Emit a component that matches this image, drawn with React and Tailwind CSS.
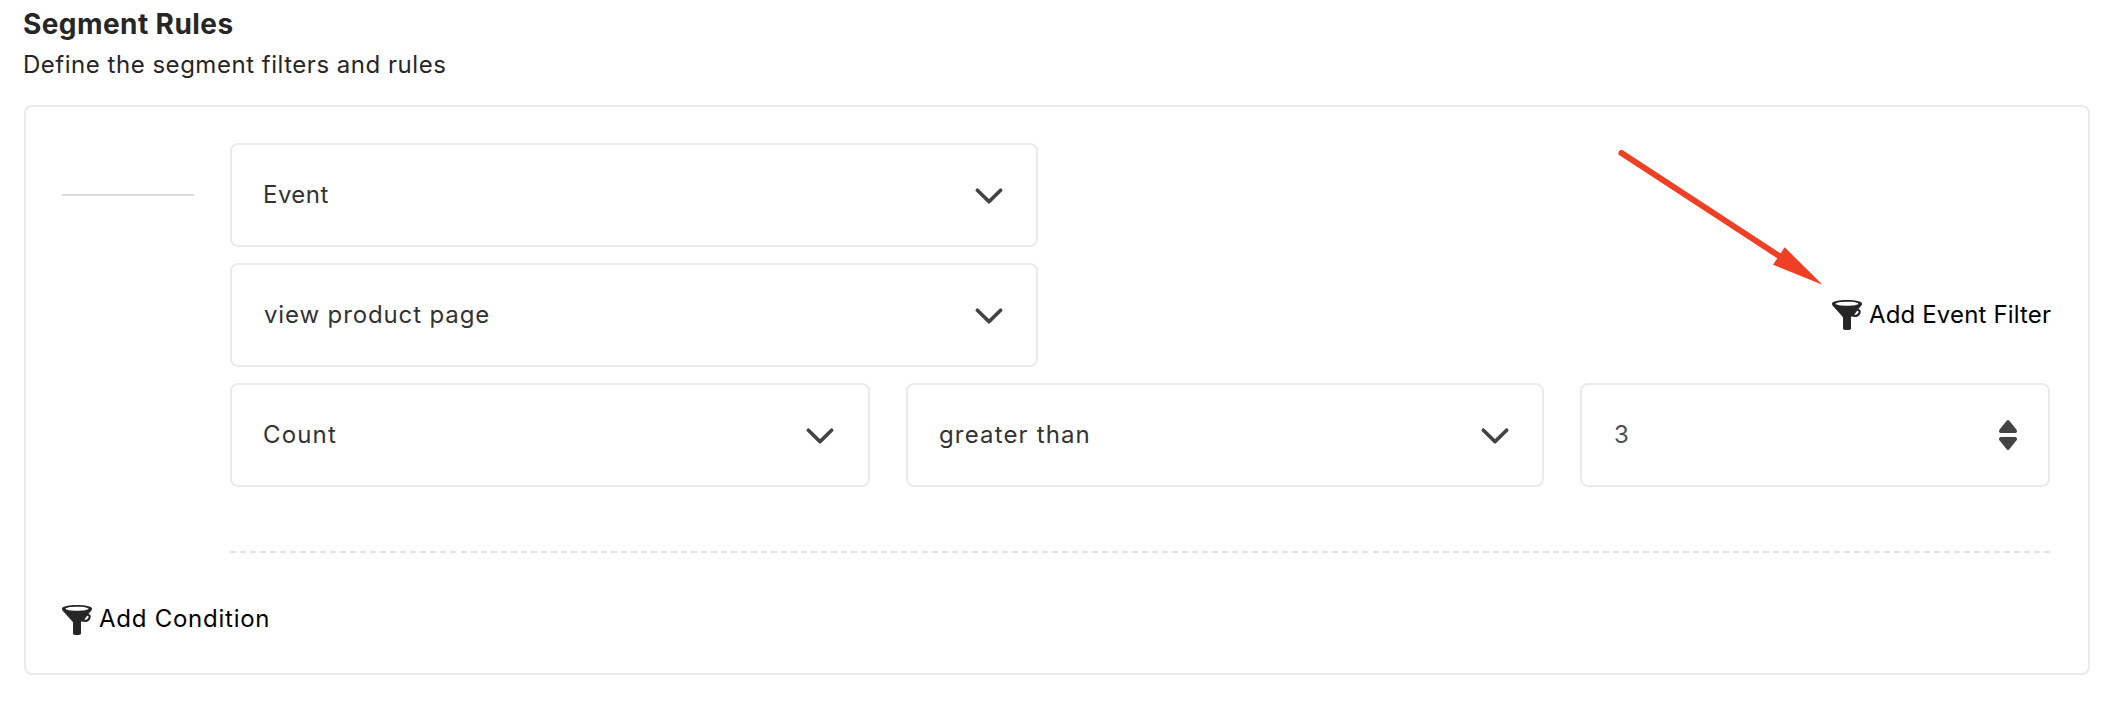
const Chevron = () => (
  <svg className="mt-0.5 h-4 w-7 shrink-0" viewBox="0 0 28 16" fill="none" stroke="#444" strokeWidth="3.6" strokeLinecap="round" strokeLinejoin="round">
    <path d="M2.4 2.2 14 13.6 25.6 2.2" />
  </svg>
);

const Funnel = () => (
  <svg className="size-[30px] shrink-0" viewBox="0 0 30 30">
    <path fill="#262626" fillRule="evenodd" d="M15 0C23 0 30 1.200 30 3.700c0 1.200-.8 2.200-1.700 3.100l-1.900 2.100c1.900.2 2.700 1.700 2.200 3.800-.6 2.600-2.500 4.200-5.100 4.200-1.400 0-2.900-.2-4.500-.5V28.500C19 29.500 17.300 30 15 30s-4-.5-4-1.500V17.200L1.700 6.800C.8 5.900 0 4.900 0 3.700 0 1.200 7 0 15 0ZM15 1.700C8.500 1.700 3.600 2.600 3.600 3.700S8.500 5.700 15 5.700s11.400-.9 11.400-2S21.500 1.700 15 1.700ZM25 10.900l-2.700 3.500c1.900.7 3.700-.2 4.200-1.800.3-1.100-.2-1.900-1.500-1.700Z" />
  </svg>
);

const Spinner = () => (
  <svg className="h-[30px] w-[18px] shrink-0" viewBox="0 0 18 30" fill="#444">
    <path d="M7.900.5Q9-.5 10.100.5L17.400 9.400Q18 10.300 18 11.300 18 13 16.300 13H1.700Q0 13 0 11.300 0 10.300.6 9.400ZM7.900 29.500Q9 30.500 10.100 29.500L17.400 20.600Q18 19.700 18 18.700 18 17 16.300 17H1.700Q0 17 0 18.700 0 19.700.6 20.600Z" />
  </svg>
);

function Field({ className, children }) {
  return (
    <div className={"flex h-[104px] items-center justify-between rounded-lg border-2 border-[#ebebeb] bg-white " + className}>
      {children}
    </div>
  );
}

export default function App() {
  return (
    <main className="relative h-[714px] w-[2112px] overflow-hidden bg-white pl-6 pt-1 font-['Inter',sans-serif] text-[24px] leading-9 text-[#333]">
      <h1 className="-ml-px h-[42px] text-[28px] font-bold leading-[41px] tracking-[0.42px] text-[#262626]">Segment Rules</h1>
      <p className="-ml-px h-[59px] leading-[38px] tracking-[0.52px] text-[#262626]">Define the segment filters and rules</p>

      <section className="h-[570px] w-[2066px] rounded-lg border-2 border-[#ebebeb] pl-9 pr-[38px] pt-9">
        <div className="flex gap-9">
          <div className="mt-[51px] h-0.5 w-[132px] bg-[#dcdcdc]" />
          <div className="flex w-[1820px] flex-col gap-4">
            <Field className="w-[808px] pl-[31px] pr-[33px]">
              <span className="tracking-[0.45px]">Event</span>
              <Chevron />
            </Field>
            <div className="flex items-center justify-between">
              <Field className="w-[808px] pl-8 pr-[33px]">
                <span className="tracking-[0.87px]">view product page</span>
                <Chevron />
              </Field>
              <button className="flex w-[218px] items-center gap-[7px] whitespace-nowrap text-black">
                <Funnel />
                <span className="tracking-[0.15px]">Add Event Filter</span>
              </button>
            </div>
            <div className="flex justify-between">
              <Field className="w-[640px] pl-[31px] pr-[34px]">
                <span className="tracking-[1.15px]">Count</span>
                <Chevron />
              </Field>
              <Field className="w-[638px] pl-[31px] pr-[33px]">
                <span className="tracking-[1.15px]">greater than</span>
                <Chevron />
              </Field>
              <Field className="w-[470px] pl-8 pr-[31px] text-[#4b5058]">
                <span>3</span>
                <Spinner />
              </Field>
            </div>
            <div className="mt-12 h-0.5 bg-[repeating-linear-gradient(90deg,#e2e2e2_0_6px,transparent_6px_10.022px)]" />
          </div>
        </div>
        <button className="mt-12 flex h-[38px] items-center gap-[7px] text-black">
          <Funnel />
          <span className="pb-0.5 tracking-[0.75px]">Add Condition</span>
        </button>
      </section>

      <svg className="absolute left-[1610px] top-[140px] h-[150px] w-[220px]" viewBox="1610 140 220 150">
        <path d="M1621.500 153 1780 256.500" stroke="#ef4026" strokeWidth="6" strokeLinecap="round" />
        <path d="M1784.700 247.300 1822.500 284.700 1773 264.700Z" fill="#ef4026" />
      </svg>
    </main>
  );
}
